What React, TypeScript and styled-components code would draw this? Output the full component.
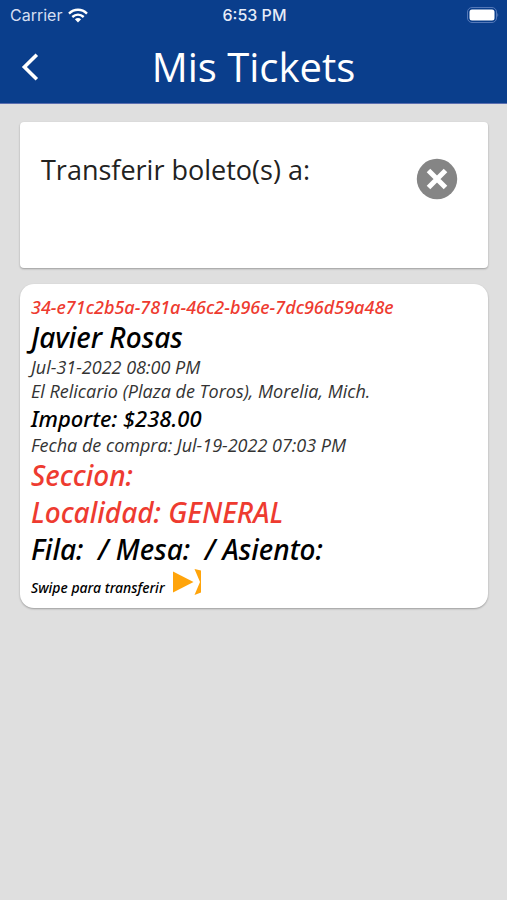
import React from "react";
import styled, { createGlobalStyle } from "styled-components";

const GlobalStyle = createGlobalStyle`
  *, *::before, *::after { box-sizing: border-box; }
  body {
    margin: 0;
    background: #dfdfdf;
    color: #000;
    font-family: "Open Sans", "Noto Sans", sans-serif;
  }
  h1, h2, p { margin: 0; font-weight: 400; }
`;

const Page = styled.div`
  min-height: 100vh;
  background: #dfdfdf;
`;

const Header = styled.header`
  background: #0a3e8c;
  color: #fff;
  border-bottom: 1px solid #5c6fb0;
`;

const StatusBar = styled.div`
  display: grid;
  grid-template-columns: 1fr auto 1fr;
  align-items: center;
  height: 30px;
  padding: 0 8px 0 10px;
  font-family: Inter, sans-serif;
  font-size: 16px;
  line-height: 20px;
`;

const Carrier = styled.div`
  display: flex;
  align-items: center;
  gap: 6px;
  color: #d5def2;
`;

const Clock = styled.time`
  font-weight: 500;
  color: #e6ecf8;
`;

const Battery = styled.svg`
  justify-self: end;
`;

const TitleBar = styled.div`
  display: grid;
  grid-template-columns: 60px 1fr 60px;
  align-items: center;
  height: 73px;
`;

const IconButton = styled.button`
  display: flex;
  align-items: center;
  justify-content: center;
  padding: 0;
  border: 0;
  background: none;
  color: inherit;
  cursor: pointer;
`;

const Title = styled.h1`
  font-size: 40px;
  line-height: 56px;
  text-align: center;
`;

const Content = styled.main`
  display: flex;
  flex-direction: column;
  gap: 16px;
  padding: 18px 19px 24px 20px;
`;

const Card = styled.section<{ $radius: number }>`
  background: #fff;
  border-radius: ${(p) => p.$radius}px;
  box-shadow: 0 1px 2px rgba(0, 0, 0, 0.3);
`;

const TransferCard = styled(Card)`
  display: flex;
  justify-content: space-between;
  align-items: flex-start;
  min-height: 146px;
  padding: 28px 30px 28px 21px;
`;

const TransferTitle = styled.h2`
  color: #222;
  font-size: 27px;
  line-height: 40px;
`;

const ClearButton = styled(IconButton)`
  margin-top: 8px;
`;

const TicketCard = styled(Card)`
  display: flex;
  flex-direction: column;
  padding: 10px 11px 6px;
  font-style: italic;
`;

type Tone = "red" | "black";
const tones: Record<Tone, string> = { red: "#ee3b30", black: "#000" };

const Detail = styled.p`
  color: #333;
  font-size: 18px;
  line-height: 24px;
`;

const Strong = styled.p<{ $size: number; $height: number; $tone: Tone }>`
  color: ${(p) => tones[p.$tone]};
  font-family: "Noto Sans", "Open Sans", sans-serif;
  font-size: ${(p) => p.$size}px;
  font-weight: 500;
  line-height: ${(p) => p.$height}px;
  white-space: pre-wrap;
`;

const SwipeRow = styled.div`
  display: flex;
  align-items: flex-start;
  gap: 8px;
  min-height: 34px;
`;

const SwipeHint = styled(Strong)`
  align-self: flex-end;
`;

export default function App() {
  return (
    <>
      <GlobalStyle />
      <Page>
        <Header>
          <StatusBar>
            <Carrier>
              <span>Carrier</span>
              <svg width="20" height="15" viewBox="0 0 20 15" fill="none" stroke="#fff" strokeWidth="2.4" aria-hidden="true">
                <path d="M1 5.6C6.2.5 13.8.5 19 5.6" />
                <path d="M4.3 9C7.7 5.900 12.300 5.900 15.700 9" />
                <path d="M6.900 11.200Q10 8.900 13.100 11.200L10 14.600Z" fill="#fff" stroke="none" />
              </svg>
            </Carrier>
            <Clock>6:53 PM</Clock>
            <Battery width="33" height="16" viewBox="0 0 33 16" role="img" aria-label="Battery full">
              <rect x="1.500" y="0.500" width="29" height="15" rx="4.500" fill="none" stroke="#5478b8" />
              <rect x="3.500" y="2.500" width="25" height="11" rx="2.500" fill="#fff" />
              <path d="M31.500 5.500Q33 8 31.500 10.500Z" fill="#6f8fc4" />
            </Battery>
          </StatusBar>
          <TitleBar>
            <IconButton type="button" aria-label="Atrás">
              <svg width="18" height="28" viewBox="0 0 18 28" fill="none" stroke="#fff" strokeWidth="3.6" aria-hidden="true">
                <path d="M15.800 1.800L3.400 14L15.800 26.200" />
              </svg>
            </IconButton>
            <Title>Mis Tickets</Title>
          </TitleBar>
        </Header>
        <Content>
          <TransferCard $radius={4}>
            <TransferTitle>Transferir boleto(s) a:</TransferTitle>
            <ClearButton type="button" aria-label="Cancelar transferencia">
              <svg width="42" height="42" viewBox="0 0 42 42" aria-hidden="true">
                <circle cx="21" cy="21" r="20.200" fill="#858585" />
                <path d="M12.500 12.500L29.500 29.500M29.500 12.500L12.500 29.500" stroke="#fff" strokeWidth="5" />
              </svg>
            </ClearButton>
          </TransferCard>
          <TicketCard $radius={14}>
            <Strong $size={18} $height={26} $tone="red">34-e71c2b5a-781a-46c2-b96e-7dc96d59a48e</Strong>
            <Strong $size={28} $height={35} $tone="black">Javier Rosas</Strong>
            <Detail>Jul-31-2022 08:00 PM</Detail>
            <Detail>El Relicario (Plaza de Toros), Morelia, Mich.</Detail>
            <Strong $size={22} $height={30} $tone="black">Importe: $238.00</Strong>
            <Detail>Fecha de compra: Jul-19-2022 07:03 PM</Detail>
            <Strong $size={28} $height={37} $tone="red">Seccion:</Strong>
            <Strong $size={28} $height={37} $tone="red">Localidad: GENERAL</Strong>
            <Strong $size={28} $height={37} $tone="black">{"Fila:  / Mesa:  / Asiento:"}</Strong>
            <SwipeRow>
              <SwipeHint $size={14} $height={28} $tone="black">Swipe para transferir</SwipeHint>
              <svg width="28" height="28" viewBox="0 0 28 28" fill="#ffa40b" aria-hidden="true">
                <path d="M0 3.500L20.500 14L0 24.500Z" />
                <path d="M21.500 1L28 2.500V24.500L21.500 27L27 14Z" />
              </svg>
            </SwipeRow>
          </TicketCard>
        </Content>
      </Page>
    </>
  );
}
